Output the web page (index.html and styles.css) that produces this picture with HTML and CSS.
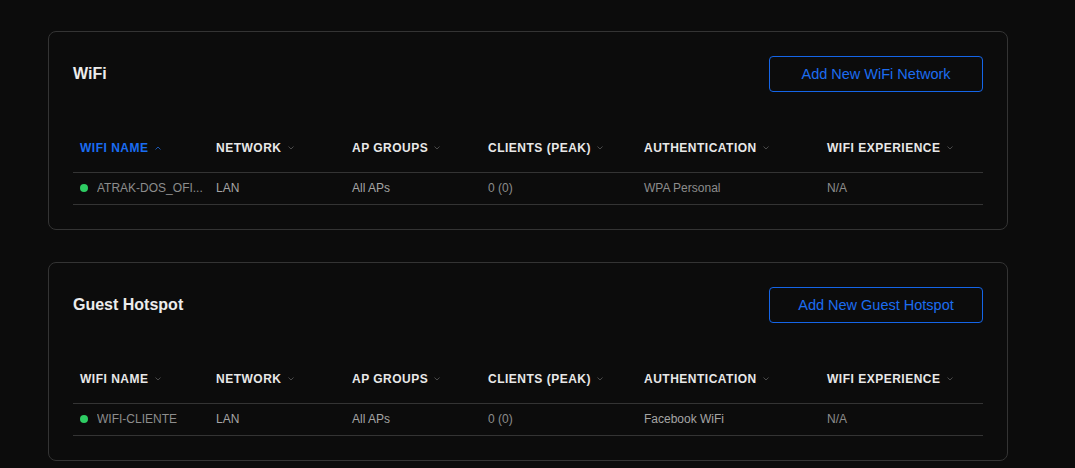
FILE: index.html
```html
<!DOCTYPE html>
<html>
<head>
<meta charset="utf-8">
<link rel="stylesheet" href="styles.css">
</head>
<body>
<main class="page">
  <section class="card">
    <div class="toolbar">
      <h2 class="title">WiFi</h2>
      <button class="btn">Add New WiFi Network</button>
    </div>
    <table class="tbl">
      <colgroup><col class="c1"><col class="c2"><col class="c3"><col class="c4"><col class="c5"><col class="c6"></colgroup>
      <thead>
        <tr>
          <th class="active">WIFI NAME<svg class="sort" viewBox="0 0 6 4" width="6" height="4"><path d="M0.5 3.5L3 1L5.5 3.5" fill="none" stroke="currentColor" stroke-width="1"/></svg></th>
          <th>NETWORK<svg class="sort" viewBox="0 0 6 4" width="6" height="4"><path d="M0.5 0.5L3 3L5.5 0.5" fill="none" stroke="currentColor" stroke-width="1"/></svg></th>
          <th>AP GROUPS<svg class="sort" viewBox="0 0 6 4" width="6" height="4"><path d="M0.5 0.5L3 3L5.5 0.5" fill="none" stroke="currentColor" stroke-width="1"/></svg></th>
          <th>CLIENTS (PEAK)<svg class="sort" viewBox="0 0 6 4" width="6" height="4"><path d="M0.5 0.5L3 3L5.5 0.5" fill="none" stroke="currentColor" stroke-width="1"/></svg></th>
          <th>AUTHENTICATION<svg class="sort" viewBox="0 0 6 4" width="6" height="4"><path d="M0.5 0.5L3 3L5.5 0.5" fill="none" stroke="currentColor" stroke-width="1"/></svg></th>
          <th>WIFI EXPERIENCE<svg class="sort" viewBox="0 0 6 4" width="6" height="4"><path d="M0.5 0.5L3 3L5.5 0.5" fill="none" stroke="currentColor" stroke-width="1"/></svg></th>
        </tr>
      </thead>
      <tbody>
        <tr>
          <td class="first"><div class="name"><span class="dot"></span><span class="ellip">ATRAK-DOS_OFI...</span></div></td>
          <td class="lt">LAN</td>
          <td class="lt">All APs</td>
          <td>0 (0)</td>
          <td>WPA Personal</td>
          <td>N/A</td>
        </tr>
      </tbody>
    </table>
  </section>

  <section class="card">
    <div class="toolbar">
      <h2 class="title">Guest Hotspot</h2>
      <button class="btn">Add New Guest Hotspot</button>
    </div>
    <table class="tbl">
      <colgroup><col class="c1"><col class="c2"><col class="c3"><col class="c4"><col class="c5"><col class="c6"></colgroup>
      <thead>
        <tr>
          <th>WIFI NAME<svg class="sort" viewBox="0 0 6 4" width="6" height="4"><path d="M0.5 0.5L3 3L5.5 0.5" fill="none" stroke="currentColor" stroke-width="1"/></svg></th>
          <th>NETWORK<svg class="sort" viewBox="0 0 6 4" width="6" height="4"><path d="M0.5 0.5L3 3L5.5 0.5" fill="none" stroke="currentColor" stroke-width="1"/></svg></th>
          <th>AP GROUPS<svg class="sort" viewBox="0 0 6 4" width="6" height="4"><path d="M0.5 0.5L3 3L5.5 0.5" fill="none" stroke="currentColor" stroke-width="1"/></svg></th>
          <th>CLIENTS (PEAK)<svg class="sort" viewBox="0 0 6 4" width="6" height="4"><path d="M0.5 0.5L3 3L5.5 0.5" fill="none" stroke="currentColor" stroke-width="1"/></svg></th>
          <th>AUTHENTICATION<svg class="sort" viewBox="0 0 6 4" width="6" height="4"><path d="M0.5 0.5L3 3L5.5 0.5" fill="none" stroke="currentColor" stroke-width="1"/></svg></th>
          <th>WIFI EXPERIENCE<svg class="sort" viewBox="0 0 6 4" width="6" height="4"><path d="M0.5 0.5L3 3L5.5 0.5" fill="none" stroke="currentColor" stroke-width="1"/></svg></th>
        </tr>
      </thead>
      <tbody>
        <tr>
          <td class="first"><div class="name"><span class="dot"></span><span class="ellip">WIFI-CLIENTE</span></div></td>
          <td class="lt">LAN</td>
          <td class="lt">All APs</td>
          <td>0 (0)</td>
          <td class="lt">Facebook WiFi</td>
          <td>N/A</td>
        </tr>
      </tbody>
    </table>
  </section>
</main>
</body>
</html>
```

FILE: styles.css
```css
* { box-sizing: border-box; }
html, body {
  margin: 0;
  background: #0c0c0c;
  font-family: "Liberation Sans", Arial, sans-serif;
  color: #e6e6e6;
}
.page {
  padding: 31px 0 0 48px;
  width: 1008px;
  display: flex;
  flex-direction: column;
  gap: 32px;
}
.card {
  border: 1px solid #343434;
  border-radius: 8px;
  background: #0c0c0c;
  padding: 24px;
  height: 199px;
}
.toolbar {
  display: flex;
  justify-content: space-between;
  align-items: center;
  height: 36px;
}
.title {
  margin: 0;
  font-size: 16px;
  font-weight: bold;
  color: #ececec;
}
.btn {
  width: 214px;
  height: 36px;
  background: transparent;
  border: 1px solid #1565e8;
  border-radius: 4px;
  color: #1c6cf0;
  font-family: "Liberation Sans", Arial, sans-serif;
  font-size: 14.5px;
  padding: 0;
}
.tbl {
  width: 910px;
  border-collapse: collapse;
  table-layout: fixed;
  margin-top: 36px;
}
.c1, .c2, .c3 { width: 136px; }
.c4 { width: 156px; }
.c5 { width: 183px; }
.c6 { width: 163px; }
th {
  text-align: left;
  font-size: 12px;
  font-weight: bold;
  letter-spacing: 0.5px;
  color: #e8e8e8;
  padding: 13px 7px 16px;
  line-height: 14px;
  height: 44px;
  vertical-align: top;
  border-bottom: 1px solid #343434;
  white-space: nowrap;
}
th.active { color: #1a6cf2; }
.sort {
  margin-left: 6px;
  vertical-align: middle;
  color: #4a4a4a;
  position: relative;
  top: -1px;
}
th.active .sort { color: #1a55b0; }
td {
  font-size: 12px;
  color: #8d8d8d;
  padding: 0 7px;
  height: 32px;
  border-bottom: 1px solid #343434;
  white-space: nowrap;
}
td.first { padding-right: 0; }
td.lt { color: #a5a5a5; }
.name {
  display: flex;
  align-items: center;
  gap: 9px;
}
.dot {
  width: 8px;
  height: 8px;
  border-radius: 50%;
  background: #2ecc63;
  flex: none;
}
.ellip {
  overflow: hidden;
  text-overflow: ellipsis;
}
```
